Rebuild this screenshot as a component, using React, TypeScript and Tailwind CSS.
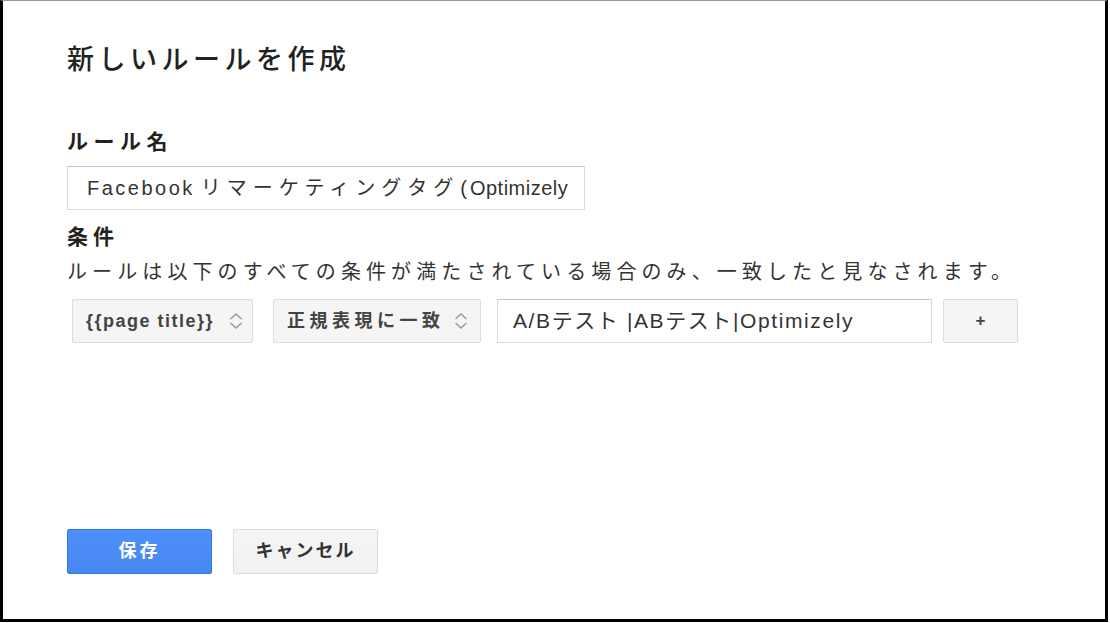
import React from 'react';

const Chevrons = () => (
  <svg width="16" height="20" viewBox="0 0 16 20" fill="none" stroke="#999" strokeWidth="1.5">
    <path d="M2.5 8 L8 3 L13.5 8" />
    <path d="M2.5 12 L8 17 L13.5 12" />
  </svg>
);

export default function App() {
  return (
    <div className="w-[1110px] h-[623px] bg-white font-['Liberation_Sans','Noto_Sans_CJK_JP',sans-serif] text-[#222]">
      <div className="w-[1108px] h-[622px] border-t border-t-[#9a9a9a] border-l-[3px] border-r-[3px] border-b-[3px] border-l-black border-r-black border-b-black pl-[64px] pt-[41px]">
        {/* title */}
        <h1 className="text-[27px] leading-[36px] tracking-[4.5px] font-medium">新しいルールを作成</h1>

        {/* rule name */}
        <div className="mt-[50px] text-[21px] leading-[28px] font-bold tracking-[5.5px]">ルール名</div>
        <div className="mt-[10px] w-[518px] h-[44px] border border-[#d9d9d9] border-t-[#c6c6c6] bg-white flex items-center pl-[19px] overflow-hidden whitespace-nowrap text-[20px] text-[#333]">
          <span className="tracking-[2.5px]">Facebook</span>
          <span className="tracking-[6px] ml-[6px]">リマーケティングタグ</span>
          <span className="ml-[1px] tracking-[3px]">(</span>
          <span className="tracking-[0.5px]">Optimizely</span>
        </div>

        {/* conditions */}
        <div className="mt-[13px] text-[21px] leading-[28px] font-bold tracking-[5px]">条件</div>
        <div className="mt-[7px] text-[20px] leading-[28px] tracking-[5.1px] text-[#333] whitespace-nowrap">
          ルールは以下のすべての条件が満たされている場合のみ、一致したと見なされます。
        </div>

        <div className="mt-[13px] flex items-center h-[44px]">
          <div className="ml-[5px] w-[181px] h-[44px] rounded-[2px] border border-[#dcdcdc] bg-[#f5f5f5] flex items-center justify-between pl-[13px] pr-[8px]">
            <span className="text-[18px] font-bold tracking-[1.5px] text-[#444]">{'{{page title}}'}</span>
            <Chevrons />
          </div>
          <div className="ml-[20px] w-[208px] h-[44px] rounded-[2px] border border-[#dcdcdc] bg-[#f5f5f5] flex items-center justify-between pl-[13px] pr-[11px]">
            <span className="text-[18px] font-bold tracking-[4.5px] text-[#444]">正規表現に一致</span>
            <Chevrons />
          </div>
          <div className="ml-[16px] w-[435px] h-[44px] border border-[#d9d9d9] border-t-[#c6c6c6] bg-white flex items-center pl-[15px] whitespace-nowrap text-[21px] text-[#333] tracking-[1.6px]">
            A/Bテスト |ABテスト|Optimizely
          </div>
          <div className="ml-[11px] w-[75px] h-[44px] rounded-[2px] border border-[#dcdcdc] bg-[#f5f5f5] flex items-center justify-center">
            <span className="text-[17px] font-bold text-[#444]">+</span>
          </div>
        </div>

        {/* actions */}
        <div className="mt-[186px] flex items-center gap-[21px]">
          <button className="w-[145px] h-[45px] rounded-[2px] border border-[#3079ed] bg-gradient-to-b from-[#4d90fe] to-[#4787ed] text-white text-[18px] font-bold tracking-[3px]">
            保存
          </button>
          <button className="w-[145px] h-[45px] rounded-[2px] border border-[#dcdcdc] bg-gradient-to-b from-[#f5f5f5] to-[#f1f1f1] text-[#333] text-[18px] font-bold tracking-[2px]">
            キャンセル
          </button>
        </div>
      </div>
    </div>
  );
}
